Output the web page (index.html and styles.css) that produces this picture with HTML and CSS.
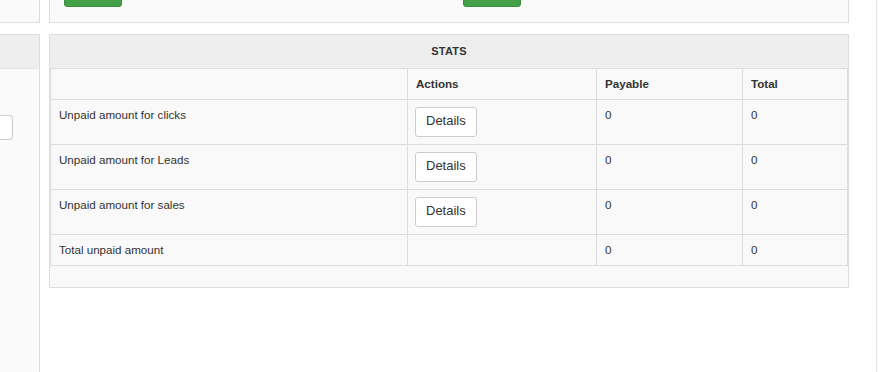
FILE: index.html
```html
<!DOCTYPE html>
<html>
<head>
<meta charset="utf-8">
<link rel="stylesheet" href="styles.css">
</head>
<body>
<div class="layout">
  <aside class="side">
    <div class="panel side-top"></div>
    <div class="panel side-main">
      <div class="panel-head"></div>
      <div class="side-body"><div class="field"></div></div>
    </div>
  </aside>
  <main class="main">
    <div class="panel top-panel">
      <div class="top-col"><span class="btn-green"></span></div>
      <div class="top-col"><span class="btn-green"></span></div>
    </div>
    <section class="panel stats">
      <div class="stats-head">STATS</div>
      <table class="stats-table">
        <colgroup>
          <col class="c1"><col class="c2"><col class="c3"><col>
        </colgroup>
        <thead>
          <tr><th></th><th>Actions</th><th>Payable</th><th>Total</th></tr>
        </thead>
        <tbody>
          <tr><td>Unpaid amount for clicks</td><td><button class="btn">Details</button></td><td>0</td><td>0</td></tr>
          <tr><td>Unpaid amount for Leads</td><td><button class="btn">Details</button></td><td>0</td><td>0</td></tr>
          <tr><td>Unpaid amount for sales</td><td><button class="btn">Details</button></td><td>0</td><td>0</td></tr>
          <tr><td>Total unpaid amount</td><td></td><td>0</td><td>0</td></tr>
        </tbody>
      </table>
    </section>
  </main>
  <div class="edge"></div>
</div>
</body>
</html>
```

FILE: styles.css
```css
* { box-sizing: border-box; }
html, body { margin: 0; padding: 0; background: #fff; overflow: hidden; }
body {
  font-family: "Liberation Sans", Arial, sans-serif;
  font-size: 12px;
  line-height: 17px;
  color: #333;
}
.layout {
  display: flex;
  align-items: stretch;
  margin-top: -20px;
  min-height: calc(100vh + 20px);
}
.panel {
  background: #fafafa;
  border: 1px solid #ddd;
}
.side {
  width: 40px;
  display: flex;
  flex-direction: column;
  gap: 11px;
}
.side-top {
  height: 43px;
  border-left: none;
  border-top: none;
}
.side-main {
  flex: 1;
  border-left: none;
  border-bottom: none;
  display: flex;
  flex-direction: column;
}
.panel-head {
  height: 34px;
  background: #eee;
  border-bottom: 1px solid #e3e3e3;
}
.side-body { padding-top: 46px; }
.field {
  width: 13px;
  height: 25px;
  background: #fff;
  border: 1px solid #ccc;
  border-left: none;
  border-radius: 0 4px 4px 0;
}
.main {
  width: 800px;
  margin-left: 9px;
  display: flex;
  flex-direction: column;
  gap: 11px;
}
.top-panel {
  height: 43px;
  border-top: none;
  display: grid;
  grid-template-columns: 399px 399px;
  align-items: end;
  padding-bottom: 15px;
}
.top-col { padding-left: 14px; }
.btn-green {
  display: block;
  width: 58px;
  height: 26px;
  background: #43a047;
  border: 1px solid #3b8e3e;
  border-radius: 3px;
}
.stats {
  background: #f9f9f9;
  padding-bottom: 21px;
}
.stats-head {
  height: 33px;
  background: #eee;
  text-align: center;
  font-size: 11px;
  font-weight: bold;
  line-height: 32px;
  letter-spacing: 0.2px;
  color: #333;
}
.stats-table {
  width: 100%;
  border-collapse: collapse;
  background: #f9f9f9;
  border: 1px solid #ddd;
}
.stats-table col.c1 { width: 357px; }
.stats-table col.c2 { width: 189px; }
.stats-table col.c3 { width: 146px; }
.stats-table th,
.stats-table td {
  border: 1px solid #ddd;
  padding: 6px 8px 7px;
  text-align: left;
  vertical-align: top;
  font-size: 11.6px;
  line-height: 17px;
}
.stats-table th { font-weight: bold; }
.btn {
  display: block;
  height: 30px;
  margin: 1px 0 0 -1px;
  padding: 0 10px 3px;
  font-family: "Liberation Sans", Arial, sans-serif;
  font-size: 13px;
  line-height: 20px;
  color: #333;
  background: #fff;
  border: 1px solid #ccc;
  border-radius: 3px;
}
.edge {
  margin-left: auto;
  width: 2px;
  background: #fafafa;
  border-left: 1px solid #e8e8e8;
}
```
